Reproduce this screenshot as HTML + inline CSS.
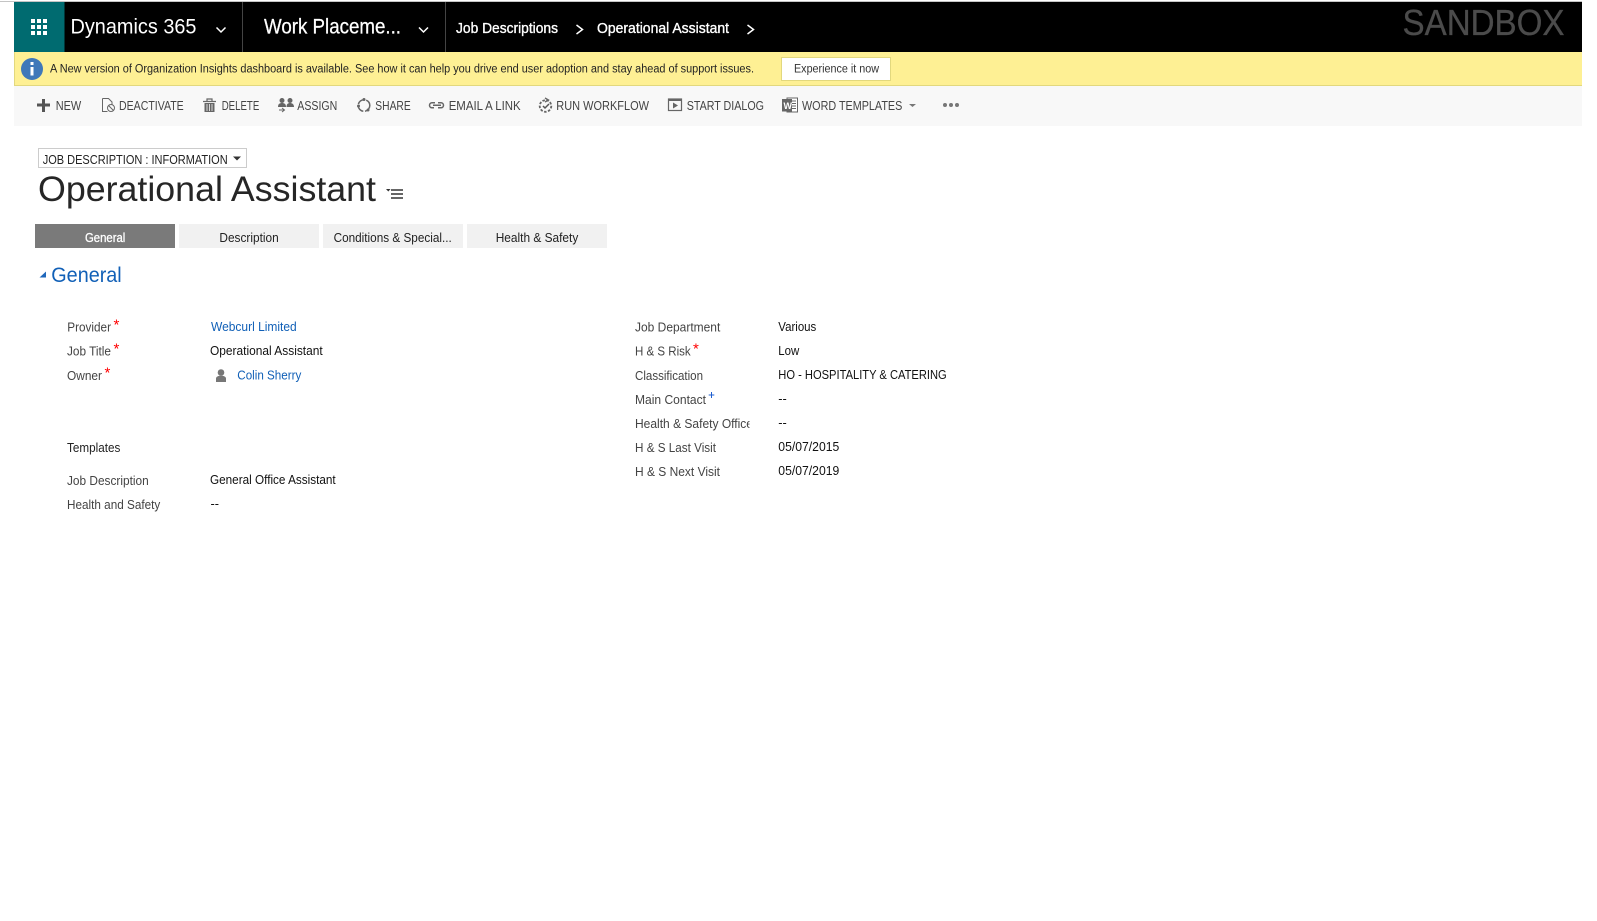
<!DOCTYPE html>
<html><head><meta charset="utf-8"><title>Operational Assistant</title>
<style>
html,body{margin:0;padding:0;background:#fff;overflow:hidden}
svg{display:block}
text{font-family:"Liberation Sans",sans-serif}
.h{fill:#fff}
.t{font-size:12.5px;fill:#444}
.l{font-size:12.5px;fill:#444}
.v{font-size:12.5px;fill:#111}
.a{font-size:12.5px;fill:#1160b7}
.s{font-size:15px;fill:#f00}
</style></head><body>
<svg width="1597" height="921" viewBox="0 0 1597 921" xmlns="http://www.w3.org/2000/svg">
<defs><clipPath id="c"><rect x="630" y="410" width="119.5" height="30"/></clipPath></defs>
<rect width="1597" height="921" fill="#fff"/>
<rect x="0" y="1" width="1582" height="1" fill="#c4c4c4"/>
<!-- header -->
<rect x="14" y="2" width="1568" height="50" fill="#000"/>
<rect x="14" y="2" width="50.5" height="50" fill="#006b70"/>
<g fill="#fff"><rect x="31" y="19" width="4" height="4"/><rect x="37" y="19" width="4" height="4"/><rect x="43" y="19" width="4" height="4"/><rect x="31" y="25" width="4" height="4"/><rect x="37" y="25" width="4" height="4"/><rect x="43" y="25" width="4" height="4"/><rect x="31" y="31" width="4" height="4"/><rect x="37" y="31" width="4" height="4"/><rect x="43" y="31" width="4" height="4"/></g>
<text class="h" x="70.5" y="33.5" font-size="21" textLength="126" lengthAdjust="spacingAndGlyphs">Dynamics 365</text>
<path d="M216.5 27.5l4.5 4.5 4.5-4.5" fill="none" stroke="#fff" stroke-width="1.5"/>
<rect x="242" y="2" width="1" height="50" fill="#444"/>
<text class="h" x="264" y="33.5" font-size="21" textLength="137" lengthAdjust="spacingAndGlyphs" stroke="#fff" stroke-width=".25">Work Placeme...</text>
<path d="M419 27.5l4.5 4.5 4.5-4.5" fill="none" stroke="#fff" stroke-width="1.5"/>
<rect x="445" y="2" width="1" height="50" fill="#444"/>
<text class="h" x="456" y="33" font-size="15" textLength="102" lengthAdjust="spacingAndGlyphs" stroke="#fff" stroke-width=".35">Job Descriptions</text>
<path d="M576.5 25l6 4.5-6 4.5" fill="none" stroke="#fff" stroke-width="1.5"/>
<text class="h" x="597" y="33" font-size="15" textLength="132" lengthAdjust="spacingAndGlyphs" stroke="#fff" stroke-width=".35">Operational Assistant</text>
<path d="M747.5 25l6 4.5-6 4.5" fill="none" stroke="#fff" stroke-width="1.5"/>
<text x="1402.500" y="35" font-size="36" fill="#4b4b4b" stroke="#4b4b4b" stroke-width=".3" textLength="162" lengthAdjust="spacingAndGlyphs">SANDBOX</text>
<!-- notification -->
<rect x="14" y="52" width="1568" height="33" fill="#fef094"/>
<rect x="14" y="85" width="1568" height="1" fill="#e2d87e"/>
<rect x="14" y="52" width="1" height="33" fill="#e2d87e"/>
<circle cx="32" cy="69" r="11" fill="#3f78b9"/>
<rect x="30.5" y="67" width="3" height="8.5" fill="#fff"/><rect x="30.5" y="62" width="3" height="3" fill="#fff"/>
<text x="50" y="72.5" font-size="11.5" fill="#222" textLength="704" lengthAdjust="spacingAndGlyphs">A New version of Organization Insights dashboard is available. See how it can help you drive end user adoption and stay ahead of support issues.</text>
<rect x="781.5" y="57.5" width="109" height="23" fill="#fff" stroke="#e2d87e"/>
<text x="794" y="72.5" font-size="11.5" fill="#333" textLength="85" lengthAdjust="spacingAndGlyphs">Experience it now</text>
<!-- toolbar -->
<rect x="14" y="86" width="1568" height="40" fill="#f8f8f8"/>
<path d="M37 105h13M43.5 99v13" stroke="#555" stroke-width="3" fill="none"/>
<text class="t" x="55.7" y="110" textLength="25.5" lengthAdjust="spacingAndGlyphs">NEW</text>
<path d="M102.5 98.5h6l3.5 3.5v3M102.500 98.500v13h5" fill="none" stroke="#666"/><circle cx="111" cy="108" r="3.5" fill="none" stroke="#666"/><path d="M108.5 105.5l5 5" stroke="#666"/>
<text class="t" x="119" y="110" textLength="64.7" lengthAdjust="spacingAndGlyphs">DEACTIVATE</text>
<path d="M203 101.5h13M207 101v-2h5v2" fill="none" stroke="#666" stroke-width="1.2"/><path d="M204.5 103h10v9h-10z" fill="#666"/><path d="M207 104v7M209.5 104v7M212 104v7" stroke="#f8f8f8" stroke-width=".8"/>
<text class="t" x="221.7" y="110" textLength="37.6" lengthAdjust="spacingAndGlyphs">DELETE</text>
<circle cx="282" cy="100.5" r="2.500" fill="#666"/><path d="M278 107c0-3 1.500-4 4-4s4 1 4 4z" fill="#666"/><circle cx="290" cy="100.5" r="2.5" fill="#666"/><path d="M286.5 107c0-3 1.500-4 3.500-4s4 1 4 4z" fill="#666"/><path d="M279 110h5M282 108l2.5 2-2.5 2" stroke="#666" fill="none"/>
<text class="t" x="297.3" y="110" textLength="40" lengthAdjust="spacingAndGlyphs">ASSIGN</text>
<circle cx="364" cy="105.5" r="5.8" fill="none" stroke="#666" stroke-width="1.5" stroke-dasharray="8 1.8"/><circle cx="364" cy="99.5" r="1.5" fill="#666"/><circle cx="358.5" cy="106" r="1.5" fill="#666"/><circle cx="368" cy="110" r="1.5" fill="#666"/>
<text class="t" x="375.3" y="110" textLength="35.4" lengthAdjust="spacingAndGlyphs">SHARE</text>
<path d="M435 102.800h-3a2.500 2.500 0 0 0 0 5h2M438 102.800h3a2.500 2.500 0 0 1 0 5h-3M433 105.300h8" fill="none" stroke="#666" stroke-width="1.5"/>
<text class="t" x="448.7" y="110" textLength="72" lengthAdjust="spacingAndGlyphs">EMAIL A LINK</text>
<circle cx="545.5" cy="106" r="5.8" fill="none" stroke="#666" stroke-width="1.8" stroke-dasharray="2.5 1.5"/><path d="M543 106l2 2 4-4" fill="none" stroke="#555" stroke-width="1.5"/><path d="M545 98l3.5 2-3.5 2" fill="none" stroke="#666" stroke-width="1.3"/>
<text class="t" x="556.3" y="110" textLength="92.7" lengthAdjust="spacingAndGlyphs">RUN WORKFLOW</text>
<rect x="668.5" y="99" width="13" height="11.5" fill="none" stroke="#666" stroke-width="1.2"/><rect x="668.5" y="99" width="13" height="2" fill="#666"/><path d="M673 102.500l5 3-5 3z" fill="#666"/>
<text class="t" x="686.7" y="110" textLength="77.3" lengthAdjust="spacingAndGlyphs">START DIALOG</text>
<rect x="787" y="98" width="10.5" height="14" fill="#fff" stroke="#666"/><path d="M792 101h4M792 103.500h4M792 106h4M792 108.500h4" stroke="#666" stroke-width=".9"/><rect x="782" y="99" width="10" height="12.5" fill="#666"/><text x="783.5" y="109" font-size="9" font-weight="bold" fill="#fff">W</text>
<text class="t" x="802" y="110" textLength="100.3" lengthAdjust="spacingAndGlyphs">WORD TEMPLATES</text>
<path d="M909 104h7l-3.500 3z" fill="#777"/>
<circle cx="945" cy="105" r="2" fill="#777"/><circle cx="951" cy="105" r="2" fill="#777"/><circle cx="957" cy="105" r="2" fill="#777"/>
<!-- title -->
<rect x="38.5" y="148.5" width="208" height="19" fill="#fff" stroke="#ccc"/>
<text x="42.7" y="164" font-size="12.5" fill="#222" textLength="185" lengthAdjust="spacingAndGlyphs">JOB DESCRIPTION : INFORMATION</text>
<path d="M233 156.500h8l-4 4z" fill="#333"/>
<text x="38" y="201" font-size="35" fill="#262626" textLength="338" lengthAdjust="spacingAndGlyphs">Operational Assistant</text>
<path d="M386 189h4.500l-2.200 2.500z" fill="#333"/><path d="M391 190h12M391 194h12M391 198h12" stroke="#333" stroke-width="1.500"/>
<!-- tabs -->
<rect x="35" y="224" width="140" height="24" fill="#7a7a7a"/>
<rect x="179" y="224" width="140" height="24" fill="#f1f1f1"/>
<rect x="323" y="224" width="140" height="24" fill="#f1f1f1"/>
<rect x="467" y="224" width="140" height="24" fill="#f1f1f1"/>
<text x="85" y="242" font-size="12.5" fill="#fff" stroke="#fff" stroke-width=".3" textLength="40.3" lengthAdjust="spacingAndGlyphs">General</text>
<text x="219.4" y="242" font-size="12.5" fill="#222" textLength="59.300" lengthAdjust="spacingAndGlyphs">Description</text>
<text x="333.6" y="242" font-size="12.5" fill="#222" textLength="118.200" lengthAdjust="spacingAndGlyphs">Conditions &amp; Special...</text>
<text x="495.7" y="242" font-size="12.5" fill="#222" textLength="82.600" lengthAdjust="spacingAndGlyphs">Health &amp; Safety</text>
<!-- section -->
<path d="M46 271.500v6h-6.500z" fill="#1f67bb"/>
<text x="51.3" y="282" font-size="21" fill="#1160b7" textLength="70.4" lengthAdjust="spacingAndGlyphs">General</text>
<!-- left column -->
<text class="l" x="67.3" y="331.7" textLength="43.7" lengthAdjust="spacingAndGlyphs">Provider</text>
<text class="s" x="113.5" y="329.5">*</text>
<text class="a" x="211" y="331" textLength="85.7" lengthAdjust="spacingAndGlyphs">Webcurl Limited</text>
<text class="l" x="67" y="355.7" textLength="44" lengthAdjust="spacingAndGlyphs">Job Title</text>
<text class="s" x="113.5" y="353.500">*</text>
<text class="v" x="210" y="355" textLength="112.7" lengthAdjust="spacingAndGlyphs">Operational Assistant</text>
<text class="l" x="67" y="380" textLength="35" lengthAdjust="spacingAndGlyphs">Owner</text>
<text class="s" x="104.5" y="377.500">*</text>
<circle cx="221" cy="372.5" r="3.3" fill="#777"/><path d="M216 382v-3.500c0-1.800 2-2.800 5-2.800s5 1 5 2.800v3.500z" fill="#777"/>
<text class="a" x="237.3" y="379.5" textLength="64" lengthAdjust="spacingAndGlyphs">Colin Sherry</text>
<text x="67" y="452" font-size="12.5" fill="#222" textLength="53.3" lengthAdjust="spacingAndGlyphs">Templates</text>
<text class="l" x="67" y="485" textLength="81.7" lengthAdjust="spacingAndGlyphs">Job Description</text>
<text class="v" x="210" y="484" textLength="125.7" lengthAdjust="spacingAndGlyphs">General Office Assistant</text>
<text class="l" x="67" y="509" textLength="93.3" lengthAdjust="spacingAndGlyphs">Health and Safety</text>
<text class="v" x="210.500" y="508" textLength="8.500" lengthAdjust="spacingAndGlyphs">--</text>
<!-- right column -->
<text class="l" x="635" y="331.7" textLength="85.3" lengthAdjust="spacingAndGlyphs">Job Department</text>
<text class="v" x="778.3" y="331" textLength="38" lengthAdjust="spacingAndGlyphs">Various</text>
<text class="l" x="635" y="355.7" textLength="55.7" lengthAdjust="spacingAndGlyphs">H &amp; S Risk</text>
<text class="s" x="693" y="353.500">*</text>
<text class="v" x="778.3" y="355" textLength="21" lengthAdjust="spacingAndGlyphs">Low</text>
<text class="l" x="635" y="380" textLength="68" lengthAdjust="spacingAndGlyphs">Classification</text>
<text class="v" x="778.3" y="379" textLength="168.4" lengthAdjust="spacingAndGlyphs">HO - HOSPITALITY &amp; CATERING</text>
<text class="l" x="635" y="404" textLength="71" lengthAdjust="spacingAndGlyphs">Main Contact</text>
<path d="M711.5 392v6M708.7 395h5.600" stroke="#1f5fd0" stroke-width="1"/>
<text class="v" x="778.3" y="403" textLength="8.500" lengthAdjust="spacingAndGlyphs">--</text>
<g clip-path="url(#c)"><text class="l" x="635" y="428" textLength="122" lengthAdjust="spacingAndGlyphs">Health &amp; Safety Officer</text></g>
<text class="v" x="778.3" y="427" textLength="8.500" lengthAdjust="spacingAndGlyphs">--</text>
<text class="l" x="635" y="452" textLength="81" lengthAdjust="spacingAndGlyphs">H &amp; S Last Visit</text>
<text class="v" x="778.3" y="451" textLength="61" lengthAdjust="spacingAndGlyphs">05/07/2015</text>
<text class="l" x="635" y="476" textLength="85" lengthAdjust="spacingAndGlyphs">H &amp; S Next Visit</text>
<text class="v" x="778.3" y="475" textLength="61" lengthAdjust="spacingAndGlyphs">05/07/2019</text>
</svg>
</body></html>
